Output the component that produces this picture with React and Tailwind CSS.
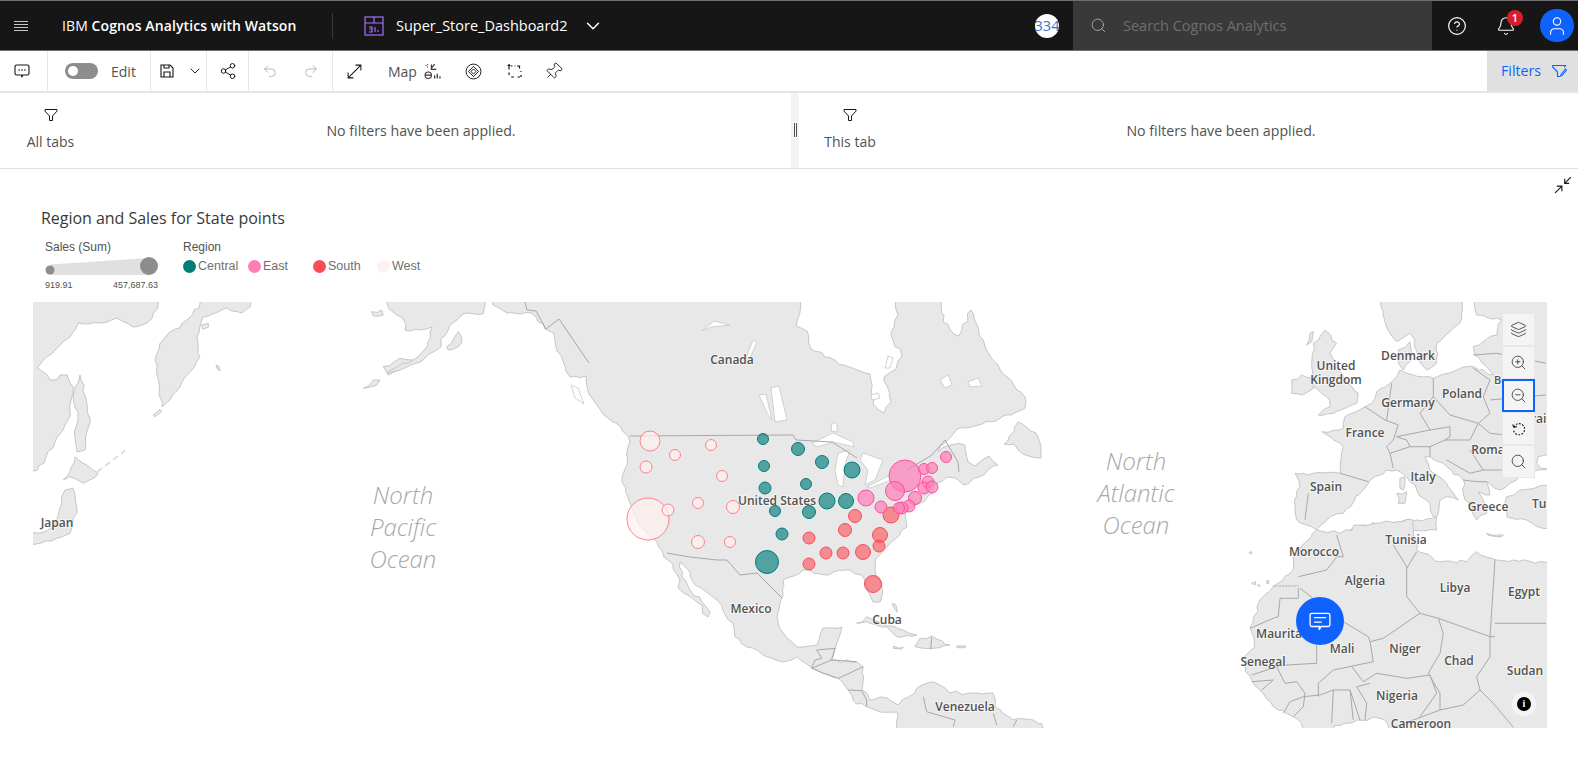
import React from "react";
import { Layers, ZoomIn, ZoomOut, Search, CircleHelp, Bell, User, ChevronDown, Share2, Undo2, Redo2, Pin } from "lucide-react";

const T = (ox, oy, pts) =>
  pts.trim().split(/\s+/).map((p) => { const [x, y] = p.split(",").map(Number); return `${(ox + x / 3).toFixed(1)},${(oy + y / 3).toFixed(1)}`; }).join(" ");
const E = (s) => T(1230, 300, s);
const A = (s) => T(1180, 520, s);
const C = (s) => T(640, 560, s);
const J = (s) => T(20, 420, s);
const S = (s) => T(0, 190, s);

// Gives straight coast segments a natural, jagged look and pushes map-edge vertices past the clip.
function rough(str, amp = 1.8, step = 5) {
  let seed = 17;
  const rnd = () => { seed = (seed * 16807) % 2147483647; return (seed % 1000) / 1000 - 0.5; };
  const pts = str.trim().split(/\s+/).map((p) => p.split(",").map(Number));
  const edge = ([x, y]) => [x <= 34 ? 20 : x >= 1546 ? 1560 : x, y <= 303 ? 290 : y >= 726.5 ? 740 : y];
  const out = [];
  pts.forEach((a, i) => {
    const b = pts[(i + 1) % pts.length];
    const onEdge = (a[0] <= 34 && b[0] <= 34) || (a[0] >= 1546 && b[0] >= 1546) || (a[1] <= 303 && b[1] <= 303) || (a[1] >= 726.5 && b[1] >= 726.5);
    out.push(edge(a));
    if (onEdge) return;
    const len = Math.hypot(b[0] - a[0], b[1] - a[1]);
    const n = Math.floor(len / step);
    for (let k = 1; k < n; k++) {
      const t = k / n;
      out.push([a[0] + (b[0] - a[0]) * t + rnd() * amp * 2, a[1] + (b[1] - a[1]) * t + rnd() * amp * 2]);
    }
  });
  return out.map(([x, y]) => `${x.toFixed(1)},${y.toFixed(1)}`).join(" ");
}

const land = [
  "33,302 160,302 147,323 133,327 117,318 100,323 78,323 70,337 55,350 37,368 50,380 67,375 73,387 68,420 63,430 53,448 33,475",
  "75,387 80,375 85,395 90,423 86,435 85,450 77,452 75,437 78,420 75,407",
  "203,302 253,302 242,313 227,308 203,317 197,337 200,357 190,372 180,387 170,400 162,407 155,360 163,340 187,320",
  J("165,110 200,135 235,160 190,190 150,170 130,180 150,155"),
  J("135,210 160,205 170,260 150,340 110,355 60,370 40,380 40,335 60,340 100,320 125,250"),
  S("1150,530 1200,505 1240,510 1165,555"),
  S("1090,595 1120,570 1140,570 1130,585"),
  S("1340,470 1375,425 1385,440 1375,470 1345,480"),
  S("1115,365 1145,360 1150,375 1120,378"),
  S("460,675 480,658 485,665 465,680"),
  S("648,525 658,530 660,542 650,535"),
  S("605,405 625,400 625,412 608,418"),
  "383,302 393,312 403,318 405,330 420,330 432,327 427,347 413,360 403,363 387,373 400,370 420,362 437,350 450,325 467,313 483,314 486,303 489,303 493,305 507,313 520,314 532,313 545,329 554,333 557,351 570,377 586,376 589,394 604,415 621,427 630,442 625,469 622,477 628,497 640,527 657,542 668,560 680,580 678,588 697,602 708,617 710,612 702,602 690,590 682,577 680,562 690,572 693,582 717,600 733,623 735,637 747,647 783,662 797,657 812,668 823,673 838,678 848,690 853,700 867,707 880,712 897,712 897,727 1047,727 1033,720 1013,720 995,707 993,693 973,693 950,693 940,685 933,682 917,688 900,703 898,705 887,698 870,700 862,690 863,667 857,662 830,660 838,640 842,627 823,628 817,645 797,647 787,638 778,622 780,603 783,595 783,580 803,570 825,575 850,570 865,580 873,602 880,602 882,587 875,570 875,560 887,547 907,527 905,513 933,493 937,483 947,477 955,478 964,485 998,465 989,456 975,466 968,462 965,445 950,445 938,452 957,429 982,424 1011,415 1025,408 1025,397 989,354 971,310 959,336 943,322 941,302 895,302 898,315 891,335 902,356 896,369 884,377 891,402 884,413 873,404 870,374 843,365 811,349 807,331 796,326 800,302",
  "1004,444 1018,422 1036,433 1041,447 1041,458 1023,454 1014,444",
  C("650,190 680,170 730,190 790,210 830,225 770,230 740,200 680,185"),
  C("840,235 875,228 930,255 880,265 825,260"),
  C("760,258 790,262 785,267 760,265"),
  C("950,258 978,258 975,263 952,263"),
  C("757,130 768,135 772,157 762,145"),
  E("185,240 215,225 245,235 250,265 215,285 185,280"),
  E("250,130 285,90 320,130 300,160 340,230 385,280 380,310 310,340 265,345 300,320 290,290 250,260 245,200"),
  E("230,135 240,100 250,95 245,125"),
  E("445,7 695,7 695,55 660,95 620,130 620,190 590,210 565,180 555,120 540,100 500,125 465,65"),
  E("505,150 540,125 545,165 520,210 505,190"),
  E("275,395 340,385 345,350 405,320 425,310 440,275 480,250 510,210 550,225 610,235 680,210 730,200 790,225 735,165 730,140 800,105 815,60 740,45 730,7 948,7 948,455 925,470 920,490 948,510 880,515 860,540 810,570 770,545 780,585 745,575 760,600 770,640 740,660 720,610 705,600 700,540 640,490 600,470 585,470 600,510 650,550 685,600 650,590 630,600 620,650 610,650 600,610 560,570 530,530 500,510 470,510 420,540 400,570 340,640 300,650 260,690 200,660 195,620 210,560 195,520 330,520 340,440 300,410"),
  E("830,590 870,570 948,555 948,690 890,660 830,650"),
  E("510,535 525,530 520,570 510,565"),
  E("500,580 530,575 525,610 505,610"),
  E("560,660 620,650 620,690 360,690 400,675 480,670"),
  A("210,320 240,240 280,200 340,150 340,110 410,30 480,40 540,15 650,5 700,0 710,90 780,125 860,125 890,95 950,120 1000,120 1098,130 1098,622 640,622 600,595 530,600 450,622 380,622 340,590 280,560 240,510 215,480 185,420 225,380"),
  A("920,40 970,45 965,50 925,46"),
  A("210,95 216,97 214,102 208,100"),
  A("215,190 228,185 225,195"),
  A("232,195 240,195 238,200"),
  A("260,182 266,182 266,192 260,190"),
];

const borders = [
  "630,436 793,435 796,440 832,442 857,458",
  "525,302 527,310 536,311 546,329 559,319 589,363",
  "907,470 932,455 945,440 958,462 959,472",
  "667,553 690,557 717,560 727,560 740,575 757,573 782,598",
  C("530,270 545,295 525,300 515,325"),
  C("530,270 585,265 575,300 515,325"),
  C("575,300 650,305"),
  C("515,325 550,340 595,355 670,320"),
  C("625,390 665,392 680,420 680,440"),
  C("875,232 872,268"),
  C("850,410 860,455 945,480 940,500"),
  C("1060,460 1070,495"),
  C("1130,480 1120,500"),
  E("330,520 415,545"),
  E("235,580 225,660"),
  E("405,320 465,360 505,375 490,420"),
  E("485,250 470,360"),
  E("610,235 610,290 570,340"),
  E("570,340 600,390 500,410"),
  E("490,420 470,440 480,460 540,440 530,420 500,410"),
  E("480,460 490,505"),
  E("540,440 600,440 600,470"),
  E("780,240 760,290 780,340 745,370"),
  E("610,290 660,345 745,370"),
  E("600,390 660,380 660,410 645,420 720,420 745,370 780,400 880,410 860,510 760,510 720,450"),
  E("600,440 645,420"),
  E("650,480 720,520 760,510"),
  E("700,540 740,545 770,545"),
  E("780,240 730,205"),
  E("730,165 800,160 948,190"),
  E("780,300 948,285"),
  E("915,450 860,400"),
  A("355,170 440,150 470,110 490,110 470,45"),
  A("360,205 490,305 565,350 570,365 610,355 720,280 680,230 680,140 640,75"),
  A("680,145 710,95"),
  A("720,280 775,295 930,350 945,120"),
  A("945,310 1098,310"),
  A("300,235 355,235 355,205"),
  A("300,235 295,290 280,295 210,325"),
  A("410,375 410,430 320,435 290,440"),
  A("570,365 580,425 460,450 415,490 415,530"),
  A("515,440 550,485 590,460 680,475 750,465 770,520 720,590"),
  A("775,295 790,340 780,400 745,460 780,520 780,570 850,555 900,510 890,470 930,410 930,350"),
  A("900,510 940,550 1000,622"),
  A("780,570 700,600 640,622"),
  A("930,350 945,350"),
  A("215,465 290,440 315,490 350,485 375,520 370,560"),
  A("215,485 280,480 245,510"),
  A("310,580 330,545 370,530 420,525 460,510 510,510 540,600"),
  A("460,510 455,610"),
  A("510,510 520,600"),
  A("555,600 560,550 530,500 570,490"),
  A("340,590 370,560"),
];
const dashed = [A("280,198 355,198")];

const lakes = [
  "812,443 833,433 853,442 854,447 833,442 817,447",
  "838,453 850,450 845,465 843,487 838,485 835,470",
  "863,453 883,460 875,480 865,485 868,470 860,460",
  "867,487 890,475 892,480 870,488",
  "702,331 714,321 730,325 711,327",
  "746,358 753,340 757,342 750,358",
  "771,388 779,386 787,420 775,422",
  "759,395 766,394 772,420 768,415",
  "832,423 837,423 837,432 831,431",
  "871,395 878,393 880,398 872,400",
  "885,368 888,356 893,358 890,368",
  "940,380 948,375 952,385 945,388",
  "968,382 978,378 982,386 970,387",
  "571,385 578,388 584,404 575,398",
];

const west = [[650,441,10],[675,455,5.5],[711,445,5.5],[646,467,6],[722,476,5.5],[648,519,21],[668,510,6],[698,503,5.5],[733,507,6.5],[698,542,6.5],[730,542,5.5]];
const central = [[763,439,5.5],[798,449,6.5],[822,462,6.5],[852,470,8],[764,466,5.5],[806,484,5.5],[765,488,6],[827,501,8],[846,501,7.5],[775,511,5.5],[809,512,6.5],[782,534,6],[767,562,11.5]];
const south = [[855,516,6.5],[845,530,6.5],[809,538,6],[891,515,8],[880,535,7.5],[879,546,6],[826,553,6],[843,553,6],[863,552,7.5],[809,564,6],[873,584,8.5]];
const east = [[905,476,16],[895,491,9.5],[866,498,8],[881,507,6],[915,498,6.5],[909,506,6],[902,508,6],[899,508,5.5],[924,469,5.5],[932,468,5.5],[946,457,5.5],[928,482,6],[924,488,6],[932,487,6]];

const labels = [
  ["Japan",57,524],["Canada",732,361],["United States",777,502],["Mexico",751,610],["Cuba",887,621],["Venezuela",965,708],
  ["United",1336,367],["Kingdom",1336,381],["Denmark",1408,357],["Germany",1408,404],["Poland",1462,395],["France",1365,434],["Italy",1423,478],["Spain",1326,488],["Greece",1488,508],["Romania",1497,451],["Belarus",1514,381,11],["Ukraine",1538,420],["Turkey",1552,505],
  ["Morocco",1314,553],["Tunisia",1406,541],["Algeria",1365,582],["Libya",1455,589],["Egypt",1524,593],["Mauritania",1288,635],["Mali",1342,650],["Niger",1405,650],["Chad",1459,662],["Sudan",1525,672],["Senegal",1263,663],["Nigeria",1397,697],["Cameroon",1421,725],
];
const oceans = [["North",403,498],["Pacific",403,530],["Ocean",403,562],["North",1136,464],["Atlantic",1136,496],["Ocean",1136,528]];

function Bubbles({ data, fill, stroke, fo }) {
  return data.map(([x, y, r], i) => <circle key={i} cx={x} cy={y} r={r} fill={fill} fillOpacity={fo} stroke={stroke} strokeWidth="1" />);
}

function MapDrawing() {
  return (
    <svg viewBox="33 302 1514 426" width="1514" height="426" className="block">
      {land.map((p, i) => <polygon key={i} points={rough(p)} fill="#e8e8e8" stroke="#c6c6c6" strokeWidth="1" strokeLinejoin="round" />)}
      {lakes.map((p, i) => <polygon key={i} points={p} fill="#ffffff" stroke="#c6c6c6" strokeWidth="0.8" />)}
      {borders.map((p, i) => <polyline key={i} points={p} fill="none" stroke="#a8a8a8" strokeWidth="1" />)}
      {dashed.map((p, i) => <polyline key={i} points={p} fill="none" stroke="#a8a8a8" strokeWidth="1" strokeDasharray="2 1" />)}
      <polyline points={J("232,155 315,92")} fill="none" stroke="#d6d6d6" strokeWidth="1.5" strokeDasharray="6 4" />
      {oceans.map(([t, x, y], i) => (
        <text key={i} x={x} y={y} textAnchor="middle" dominantBaseline="middle" fontFamily="'Open Sans',sans-serif" fontStyle="italic" fontWeight="300" fontSize="24" fill="#a8a8a8">{t}</text>
      ))}
      {labels.map(([t, x, y, fs], i) => (
        <text key={i} x={x} y={y} textAnchor="middle" dominantBaseline="middle" fontFamily="'Open Sans',sans-serif" fontWeight="600" fontSize={fs || 12} fill="#525252" stroke="#ffffff" strokeOpacity="0.55" strokeWidth="2" paintOrder="stroke">{t}</text>
      ))}
      <Bubbles data={west} fill="#fff1f1" stroke="#ff8389" fo={0.7} />
      <Bubbles data={central} fill="#007d79" stroke="#007d79" fo={0.65} />
      <Bubbles data={south} fill="#fa4d56" stroke="#fa4d56" fo={0.6} />
      <Bubbles data={east} fill="#ff7eb6" stroke="#ff4d9d" fo={0.7} />
    </svg>
  );
}

function Funnel() {
  return (
    <svg viewBox="0 0 16 16" width="16" height="16" fill="none" stroke="#161616" strokeWidth="1">
      <path d="M2 2.5h12v1.6L9.5 9v4.5l-3 0V9L2 4.1z" strokeLinejoin="round" />
    </svg>
  );
}

function DashedRotate() {
  return (
    <svg viewBox="0 0 16 16" width="16" height="16" fill="none" stroke="#161616" strokeWidth="1.1">
      <path d="M3 6.2A5.6 5.6 0 0 1 8 2.6a5.6 5.6 0 1 1-5.6 5.6" strokeDasharray="1.8 1.4" />
      <path d="M1.6 3.4 3 6.4l3-1" />
    </svg>
  );
}

function Cell({ children, active }) {
  return (
    <div className={active ? "w-[33px] h-[33px] bg-[#f4f4f4] border-2 border-[#0f62fe] flex items-center justify-center" : "w-[33px] h-[33px] bg-[#f4f4f4] border border-[#e8e8e8] flex items-center justify-center"}>
      {children}
    </div>
  );
}

function Dot({ color, label, w }) {
  return (
    <div className={`flex items-center ${w}`}>
      <span className={`w-[13px] h-[13px] rounded-full ${color}`} />
      <span className="ml-[2px] text-[#6f6f6f] text-[12.5px] font-['Liberation_Sans',sans-serif]">{label}</span>
    </div>
  );
}

export default function App() {
  return (
    <div className="w-[1578px] h-[767px] overflow-hidden bg-white font-['Open_Sans',sans-serif] text-[#393939]">
      <header className="h-[51px] bg-[#161616] border-t border-b border-[#6f6f6f] flex items-center text-white">
        <div className="w-[62px] flex justify-center pr-[20px]">
          <svg viewBox="0 0 14 12" width="14" height="12" stroke="#c6c6c6" strokeWidth="1"><path d="M0 1.5h14M0 4.5h14M0 7.5h14M0 10.5h14" /></svg>
        </div>
        <div className="w-[270px] text-[14px] whitespace-nowrap tracking-[0.1px]"><span className="font-normal">IBM </span><span className="font-semibold">Cognos Analytics with Watson</span></div>
        <div className="w-px h-[26px] bg-[#393939]" />
        <svg viewBox="0 0 20 20" width="20" height="20" fill="none" stroke="#a56eff" strokeWidth="1.2" className="ml-[31px]">
          <rect x="1" y="1" width="18" height="18" /><path d="M1 7h18M10 1v6M5 11h3v2H5.5M8 13v3H5M11 11v5M14 14v2" />
        </svg>
        <div className="ml-[12px] text-[14.5px] w-[186px] whitespace-nowrap">Super_Store_Dashboard2</div>
        <ChevronDown size={22} strokeWidth={1.6} className="text-white" />
        <div className="flex-1 flex justify-end pr-[14px]">
          <div className="relative w-[24px] h-[24px] rounded-full bg-white flex items-center justify-center overflow-visible">
            <span className="text-[#3b6fc4] text-[14.5px] whitespace-nowrap">334</span>
          </div>
        </div>
        <div className="w-[359px] h-full bg-[#393939] flex items-center pl-[17px]">
          <Search size={17} strokeWidth={1.3} className="text-[#a8a8a8]" />
          <span className="ml-[16px] text-[14.5px] text-[#6f6f6f]">Search Cognos Analytics</span>
        </div>
        <div className="w-[146px] h-full flex items-center relative">
          <CircleHelp size={20} strokeWidth={1.4} className="ml-[15px]" />
          <Bell size={20} strokeWidth={1.3} className="ml-[29px]" />
          <span className="absolute left-[75px] top-[9px] w-[16px] h-[16px] rounded-full bg-[#da1e28] text-white text-[11px] font-semibold flex items-center justify-center">1</span>
          <div className="absolute left-[108px] top-[8px] w-[34px] h-[33px] rounded-full bg-[#0f62fe] flex items-center justify-center">
            <User size={22} strokeWidth={1.2} />
          </div>
        </div>
      </header>

      <div className="h-[42px] border-b-2 border-[#e5e5e5] flex items-stretch text-[#161616]">
        <div className="w-[48px] border-r border-[#e5e5e5] flex items-center justify-center pr-[3px]">
          <svg viewBox="0 0 16 16" width="16" height="16" fill="none" stroke="#161616" strokeWidth="1.1"><path d="M2.5 2h11A1.5 1.5 0 0 1 15 3.5v7a1.5 1.5 0 0 1-1.5 1.5H9l-1.4 2.2.2-2.2H2.5A1.5 1.5 0 0 1 1 10.5v-7A1.5 1.5 0 0 1 2.5 2z" /><path d="M4.5 7h1.2M7.4 7h1.2M10.3 7h1.2" strokeWidth="1.4" /></svg>
        </div>
        <div className="w-[103px] border-r border-[#e5e5e5] flex items-center pl-[17px]">
          <div className="w-[33px] h-[16px] rounded-full bg-[#8d8d8d] relative">
            <span className="absolute left-[3px] top-[3px] w-[10px] h-[10px] rounded-full bg-white" />
          </div>
          <span className="ml-[13px] text-[14px] text-[#525252]">Edit</span>
        </div>
        <div className="w-[56px] border-r border-[#e5e5e5] flex items-center pl-[8px]">
          <svg viewBox="0 0 16 16" width="16" height="16" fill="none" stroke="#161616" strokeWidth="1.1"><path d="M2 2h9l3 3v9H2z" /><path d="M5 14V9h6v5M5 2v3h5V2" /></svg>
          <ChevronDown size={16} strokeWidth={1.4} className="ml-[12px]" />
        </div>
        <div className="w-[42px] border-r border-[#e5e5e5] flex items-center justify-center">
          <Share2 size={18} strokeWidth={1.3} />
        </div>
        <div className="w-[84px] border-r border-[#e5e5e5] flex items-center pl-[13px] text-[#a8a8a8]">
          <Undo2 size={16} strokeWidth={1.2} />
          <Redo2 size={16} strokeWidth={1.2} className="ml-[25px]" />
        </div>
        <div className="flex items-center flex-1">
          <svg viewBox="0 0 16 16" width="17" height="17" fill="none" stroke="#161616" strokeWidth="0.95" className="ml-[13px]"><path d="M2 14 14 2M9 2h5v5M2 9v5h5" /></svg>
          <span className="ml-[25px] text-[14px] text-[#525252]">Map</span>
          <svg viewBox="0 0 16 16" width="17" height="17" fill="none" stroke="#393939" strokeWidth="1" className="ml-[7px]"><path d="M10 1 6.5 5.5M7 1.5v4.5h4.5" strokeWidth="1.1" /><path d="M1.5 2l2 2M3 1l1 1" strokeDasharray="1 1" /><circle cx="4" cy="11.5" r="3" /><path d="M1 11.5h6M10 14.5v-3M12.5 14.5V10M15 14.5v-2" strokeWidth="1.2" /></svg>
          <svg viewBox="0 0 16 16" width="17" height="17" fill="none" stroke="#161616" strokeWidth="0.9" className="ml-[24px]"><circle cx="8" cy="8" r="7" /><path d="M8 3.2 12.8 8 8 12.8 3.2 8z" /><path d="M8 5.6 10.4 8 8 10.4 5.6 8z" /></svg>
          <svg viewBox="0 0 16 16" width="16" height="16" fill="none" stroke="#161616" strokeWidth="1.2" className="ml-[25px]"><path d="M4 3h1.5M10 3h2.5v2.5M14 8v1M13 14h-2.5M7 14H4.2M2 12V9.5M2 6.5V4M2 1v3M.5 2.5h3M7.5 3h1M14 12v2" /></svg>
          <Pin size={19} strokeWidth={1.1} className="ml-[21px] rotate-45" />
        </div>
        <div className="w-[91px] bg-[#e0e0e0] flex items-center pl-[14px] text-[#0f62fe]">
          <span className="text-[14.2px]">Filters</span>
          <svg viewBox="0 0 16 16" width="16" height="16" fill="none" stroke="#0f62fe" strokeWidth="1.1" className="ml-[10px]"><path d="M1.5 2.5h13l-1.2 2M1.5 2.5v1.2L6.5 9v4.5h2.6" /><path d="M10 11.5 14.5 6l1 1L11 12.5l-1.4.4z" /></svg>
        </div>
      </div>

      <div className="h-[76px] border-b border-[#e0e0e0] flex">
        <div className="w-[791px] flex">
          <div className="w-[101px] flex flex-col items-center pt-[14px]">
            <Funnel />
            <span className="mt-[8px] text-[14px] text-[#525252]">All tabs</span>
          </div>
          <div className="w-[640px] pt-[27px] text-center text-[14.2px] text-[#525252]">No filters have been applied.</div>
        </div>
        <div className="w-[8px] bg-[#f4f4f4] flex items-center justify-center pb-[1px]"><span className="w-[3px] h-[14px] border-x border-[#525252]" /></div>
        <div className="flex-1 flex">
          <div className="w-[100px] flex flex-col items-center pt-[14px] ml-[1px]">
            <Funnel />
            <span className="mt-[8px] text-[14px] text-[#525252]">This tab</span>
          </div>
          <div className="w-[642px] pt-[27px] text-center text-[14.2px] text-[#525252]">No filters have been applied.</div>
        </div>
      </div>

      <main className="relative flex flex-col">
        <svg viewBox="0 0 16 16" width="18" height="18" fill="none" stroke="#161616" strokeWidth="1" className="absolute right-[6px] top-[7px]"><path d="M1 15 7 9M2.5 9H7v4.5M15 1 9.5 6.5M9.5 2.5v4h4" /></svg>
        <h1 className="ml-[41px] mt-[38px] h-[22px] leading-[22px] text-[16px] font-normal text-[#393939] tracking-[-0.03px]">Region and Sales for State points</h1>
        <div className="ml-[45px] mt-[10px] h-[62px] flex">
          <div className="w-[138px] font-['Liberation_Sans',sans-serif]">
            <div className="text-[12px] leading-[16px] text-[#525252]">Sales (Sum)</div>
            <svg viewBox="0 0 114 22" width="114" height="22" className="mt-[2px] block">
              <path d="M5 7.5 104 1v17H5z" fill="#e0e0e0" />
              <circle cx="5" cy="13" r="4.5" fill="#8d8d8d" />
              <circle cx="104" cy="9" r="9" fill="#8d8d8d" />
            </svg>
            <div className="w-[113px] flex justify-between text-[9px] leading-[12px] text-[#525252]"><span>919.91</span><span>457,687.63</span></div>
          </div>
          <div>
            <div className="text-[12px] leading-[16px] text-[#525252] font-['Liberation_Sans',sans-serif]">Region</div>
            <div className="flex mt-[2px]">
              <Dot color="bg-[#007d79]" label="Central" w="w-[65px]" />
              <Dot color="bg-[#ff7eb6]" label="East" w="w-[65px]" />
              <Dot color="bg-[#fa4d56]" label="South" w="w-[64px]" />
              <Dot color="bg-[#fff1f1]" label="West" w="w-[65px]" />
            </div>
          </div>
        </div>
        <div className="ml-[33px] w-[1514px] h-[426px] relative overflow-hidden mt-[1px]">
          <MapDrawing />
          <div className="absolute left-[1469px] top-[11px] flex flex-col">
            <Cell><Layers size={17} strokeWidth={1.2} /></Cell>
            <Cell><ZoomIn size={17} strokeWidth={1.2} /></Cell>
            <Cell active><ZoomOut size={17} strokeWidth={1.2} /></Cell>
            <Cell><DashedRotate /></Cell>
            <Cell><Search size={17} strokeWidth={1.2} /></Cell>
          </div>
          <div className="absolute left-[1479px] top-[390px] w-[24px] h-[24px] rounded-full bg-[#f4f4f4] flex items-center justify-center">
            <span className="w-[14px] h-[14px] rounded-full bg-black text-white text-[10px] leading-[14px] text-center font-bold font-['Liberation_Serif',serif]">i</span>
          </div>
          <div className="absolute left-[1263px] top-[295px] w-[48px] h-[48px] rounded-full bg-[#0f62fe] flex items-center justify-center">
            <svg viewBox="0 0 20 20" width="22" height="22" fill="none" stroke="#fff" strokeWidth="1.2"><path d="M2.5 3h15A1.5 1.5 0 0 1 19 4.5v9a1.5 1.5 0 0 1-1.5 1.5H11l-1.8 3 .3-3H2.5A1.5 1.5 0 0 1 1 13.5v-9A1.5 1.5 0 0 1 2.5 3z" /><path d="M4.5 7h11M4.5 11h7" /></svg>
          </div>
        </div>
      </main>
    </div>
  );
}
